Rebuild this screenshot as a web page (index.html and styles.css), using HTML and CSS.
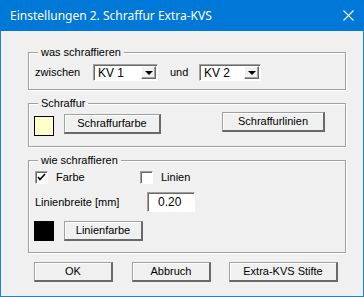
FILE: index.html
```html
<!DOCTYPE html>
<html lang="de">
<head>
    <meta charset="UTF-8">
    <title>Einstellungen 2. Schraffur Extra-KVS</title>
    <link rel="stylesheet" href="styles.css">
</head>
<body>
    <div class="window">
        <div class="titlebar">
            <span class="title">Einstellungen 2. Schraffur Extra-KVS</span>
            <svg class="close" width="11" height="11" viewBox="0 0 11 11">
                <path d="M0.5 0.5 L10.5 10.5 M10.5 0.5 L0.5 10.5" stroke="#fff" stroke-width="1.1" fill="none"/>
            </svg>
        </div>

        <div class="content">
            <fieldset class="group group-was">
                <legend>was schraffieren</legend>
                <div class="row">
                    <span class="lbl lbl-zwischen">zwischen</span>
                    <div class="combo combo-1">
                        <span class="combo-text">KV 1</span>
                        <span class="combo-btn"><i class="tri"></i></span>
                    </div>
                    <span class="lbl lbl-und">und</span>
                    <div class="combo combo-2">
                        <span class="combo-text">KV 2</span>
                        <span class="combo-btn"><i class="tri"></i></span>
                    </div>
                </div>
            </fieldset>

            <fieldset class="group group-schraffur">
                <legend>Schraffur</legend>
                <div class="row row-top">
                    <span class="swatch swatch-yellow"></span>
                    <button class="btn btn-farbe">Schraffurfarbe</button>
                    <button class="btn btn-linien">Schraffurlinien</button>
                </div>
            </fieldset>

            <fieldset class="group group-wie">
                <legend>wie schraffieren</legend>
                <div class="row row-check">
                    <span class="check check-farbe">
                        <svg width="9" height="9" viewBox="0 0 9 9">
                            <path d="M1 4 L3 6.5 L8 1" stroke="#000" stroke-width="1.6" fill="none"/>
                        </svg>
                    </span>
                    <span class="lbl lbl-farbe">Farbe</span>
                    <span class="check check-linien"></span>
                    <span class="lbl">Linien</span>
                </div>
                <div class="row row-breite">
                    <span class="lbl lbl-breite">Linienbreite [mm]</span>
                    <span class="edit">0.20</span>
                </div>
                <div class="row row-linienfarbe">
                    <span class="swatch swatch-black"></span>
                    <button class="btn btn-linienfarbe">Linienfarbe</button>
                </div>
            </fieldset>

            <div class="row row-buttons">
                <button class="btn btn-ok">OK</button>
                <button class="btn btn-abbruch">Abbruch</button>
                <button class="btn btn-stifte">Extra-KVS Stifte</button>
            </div>
        </div>
    </div>
</body>
</html>
```

FILE: styles.css
```css
* {
    margin: 0;
    padding: 0;
    box-sizing: border-box;
}

body {
    background: #fff;
    font-family: "Liberation Sans", Arial, sans-serif;
    font-size: 11px;
    line-height: 13px;
    color: #000;
}

.window {
    width: 364px;
    height: 297px;
    background: #f0f0f0;
    border: 1px solid #1883d7;
    border-top: none;
}

.titlebar {
    height: 31px;
    margin: 0 -1px;
    background: #0078d7;
    display: flex;
    align-items: center;
    justify-content: space-between;
    padding: 0 10px 0 10px;
}

.title {
    font-family: "Noto Sans", "Open Sans", sans-serif;
    font-size: 12px;
    color: #fff;
    padding-bottom: 1px;
}

.close {
    display: block;
    margin-right: 0;
}

.content {
    padding: 15px 0 0 27px;
}

/* group boxes */
.group {
    width: 318px;
    border: 1px solid #a0a0a0;
    box-shadow: 1px 1px 0 #fff, inset 1px 1px 0 #fff;
    padding: 0 5px;
}

.group legend {
    margin-left: 4px;
    padding: 0 3px;
    background: #f0f0f0;
    line-height: 13px;
}

.group-was {
    padding-top: 5px;
    padding-bottom: 8px;
}

.group-schraffur {
    margin-top: 7px;
    padding-top: 2px;
    padding-bottom: 10px;
}

.group-wie {
    margin-top: 7px;
    padding-top: 4px;
    padding-bottom: 11px;
}

.row {
    display: flex;
    align-items: center;
}

.row-top {
    align-items: flex-start;
}

.lbl-zwischen {
    width: 59px;
    padding-left: 1px;
}

.lbl-und {
    width: 41px;
    padding-left: 12px;
}

/* combo boxes */
.combo {
    height: 17px;
    display: flex;
    background: #fff;
    border: 1px solid;
    border-color: #a0a0a0 #fff #fff #a0a0a0;
    box-shadow: inset 1px 1px 0 #696969;
    padding: 1px 1px 1px 1px;
}

.combo-1 {
    width: 65px;
}

.combo-2 {
    width: 62px;
}

.combo-text {
    flex: 1;
    padding-left: 3px;
    font-size: 12px;
    line-height: 14px;
}

.combo-btn {
    width: 15px;
    height: 13px;
    background: #f0f0f0;
    border: 1px solid;
    border-color: #fff #696969 #696969 #fff;
    box-shadow: inset -1px -1px 0 #a0a0a0;
    display: flex;
    align-items: center;
    justify-content: center;
}

.tri {
    width: 0;
    height: 0;
    border-left: 4px solid transparent;
    border-right: 4px solid transparent;
    border-top: 4px solid #000;
    margin-top: 1px;
}

/* push buttons */
.btn {
    font-family: "Liberation Sans", Arial, sans-serif;
    font-size: 11px;
    line-height: 13px;
    color: #000;
    height: 20px;
    background: #f0f0f0;
    border-style: solid;
    border-width: 1px 2px 2px 1px;
    border-color: #a0a0a0 #696969 #696969 #a0a0a0;
    box-shadow: inset 1px 1px 0 #fff;
}

.btn-farbe {
    width: 97px;
    margin-top: 2px;
    margin-left: 10px;
}

.btn-linien {
    width: 103px;
    margin-left: 61px;
}

.swatch {
    display: block;
    width: 20px;
    height: 20px;
    border: 1px solid #000;
}

.swatch-yellow {
    background: #ffffcc;
    margin-top: 4px;
}

.swatch-black {
    background: #000;
}

/* check boxes */
.check {
    width: 13px;
    height: 13px;
    background: #fff;
    border: 1px solid;
    border-color: #a0a0a0 #fff #fff #a0a0a0;
    box-shadow: inset 1px 1px 0 #696969;
    display: flex;
    align-items: center;
    justify-content: center;
}

.check-farbe {
    margin-left: 1px;
}

.lbl-farbe {
    width: 92px;
    padding-left: 8px;
}

.check-linien {
    margin-right: 8px;
}

.row-check {
    height: 13px;
}

.row-breite {
    margin-top: 8px;
}

.lbl-breite {
    width: 113px;
    padding-left: 1px;
}

.edit {
    width: 48px;
    height: 20px;
    background: #fff;
    border: 1px solid;
    border-color: #a0a0a0 #fff #fff #a0a0a0;
    box-shadow: inset 1px 1px 0 #696969;
    padding: 2px 0 0 10px;
    font-size: 12px;
    line-height: 14px;
}

.row-linienfarbe {
    margin-top: 9px;
}

.btn-linienfarbe {
    width: 79px;
    margin-left: 10px;
}

.row-buttons {
    margin-top: 9px;
    padding-left: 6px;
}

.btn-ok,
.btn-abbruch {
    width: 79px;
}

.btn-abbruch {
    margin-left: 19px;
}

.btn-stifte {
    width: 109px;
    margin-left: 18px;
}
```
